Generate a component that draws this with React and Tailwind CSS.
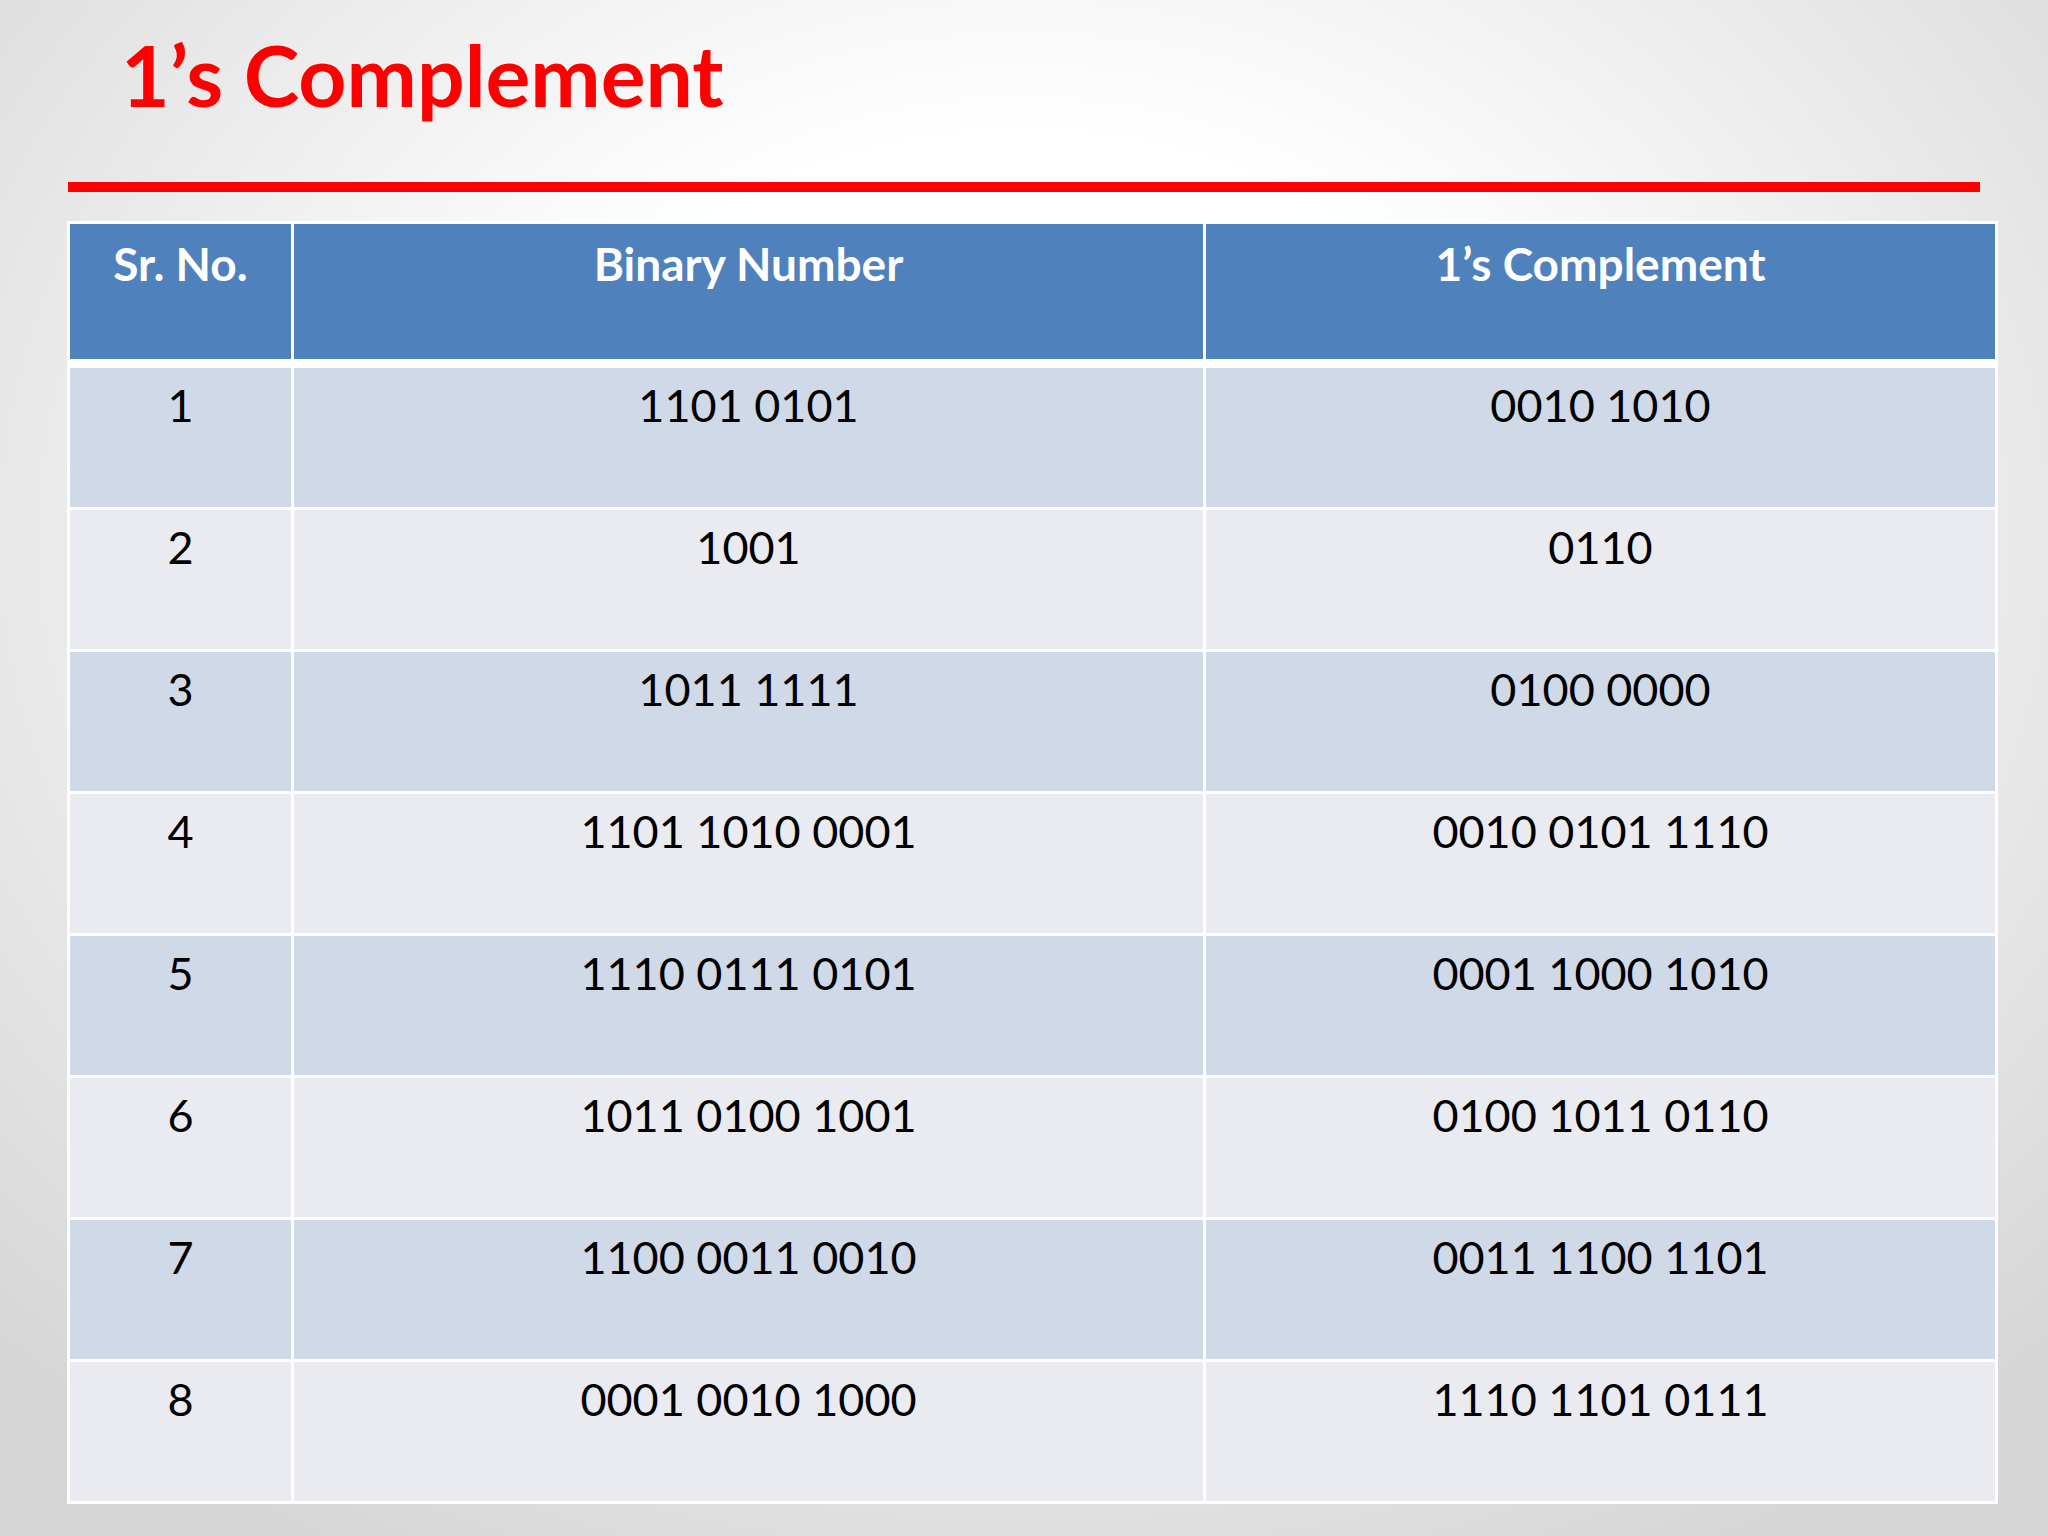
const rows = [
  ["1", "1101 0101", "0010 1010"],
  ["2", "1001", "0110"],
  ["3", "1011 1111", "0100 0000"],
  ["4", "1101 1010 0001", "0010 0101 1110"],
  ["5", "1110 0111 0101", "0001 1000 1010"],
  ["6", "1011 0100 1001", "0100 1011 0110"],
  ["7", "1100 0011 0010", "0011 1100 1101"],
  ["8", "0001 0010 1000", "1110 1101 0111"],
];

const cols = "grid grid-cols-[221px_909px_789px] gap-x-[3px]";

export default function App() {
  return (
    <div className="w-[2048px] h-[1536px] overflow-hidden font-['Lato',sans-serif] bg-[radial-gradient(ellipse_70%_75%_at_50%_35%,#ffffff_35%,#d6d6d6_100%)]">
      <h1 className="pt-[33px] pl-[121px] h-[117px] text-[84px] leading-none font-bold text-[#ff0000]">
        1’s Complement
      </h1>

      <div className="mt-[65px] ml-[68px] w-[1912px] h-[10px] bg-[#ff0000]" />

      <div className="mt-[29px] ml-[67px] w-[1931px] bg-white p-[3px] flex flex-col">
        <div className={`${cols} h-[135px] mb-[9px]`}>
          {["Sr. No.", "Binary Number", "1’s Complement"].map((h) => (
            <div
              key={h}
              className="bg-[#4f81bd] text-white font-bold text-[46px] leading-none text-center pt-[17px]"
            >
              {h}
            </div>
          ))}
        </div>

        <div className="flex flex-col gap-y-[3px]">
          {rows.map((r, i) => (
            <div key={r[0]} className={`${cols} h-[139px]`}>
              {r.map((c, j) => (
                <div
                  key={j}
                  className={`${
                    i % 2 === 0 ? "bg-[#d0d9e7]" : "bg-[#e9ebf0]"
                  } text-black text-[45px] leading-none text-center pt-[15px]`}
                >
                  {c}
                </div>
              ))}
            </div>
          ))}
        </div>
      </div>
    </div>
  );
}
